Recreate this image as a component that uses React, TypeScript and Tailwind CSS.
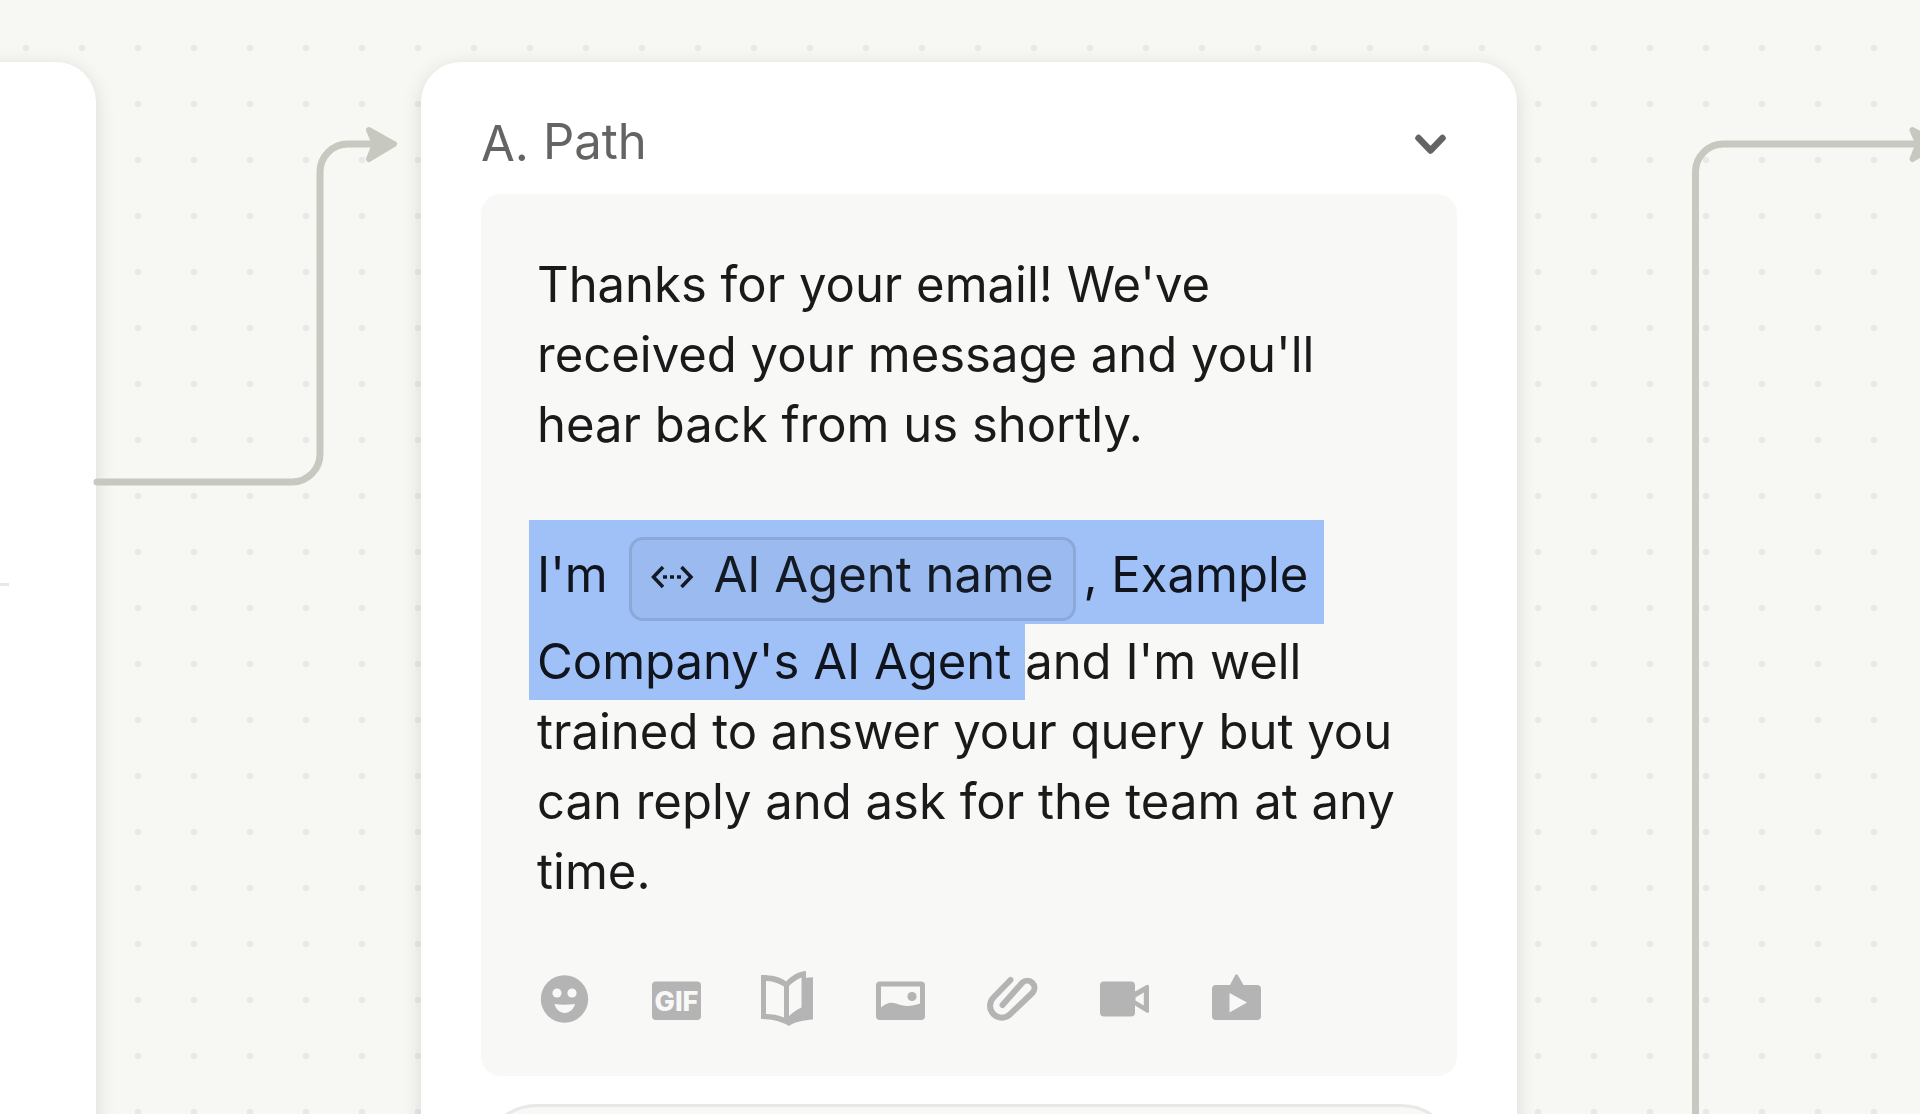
import type { ReactNode } from 'react';

const Icon = ({ children }: { children: ReactNode }) => (
  <svg viewBox="0 0 56 56" className="h-14 w-14" fill="currentColor" aria-hidden="true">
    {children}
  </svg>
);

const tools = [
  {
    label: 'Insert emoji',
    icon: (
      <Icon>
        <circle cx="27.5" cy="28" r="23.7" />
        <g fill="#f8f8f7">
          <circle cx="20" cy="22" r="4.6" />
          <circle cx="35" cy="22" r="4.6" />
          <path d="M17.5 33q10 1.6 20.5 0c-1.5 5.5-5.5 9-10.2 9s-9-3.5-10.3-9z" />
        </g>
      </Icon>
    ),
  },
  {
    label: 'Insert GIF',
    icon: (
      <Icon>
        <rect x="3" y="10.5" width="49" height="38.5" rx="4" />
        <text
          x="27.5"
          y="39.5"
          textAnchor="middle"
          fill="#f8f8f7"
          className="font-['Inter',sans-serif] text-[27px] font-extrabold"
        >
          GIF
        </text>
      </Icon>
    ),
  },
  {
    label: 'Insert article',
    icon: (
      <Icon>
        <path
          fillRule="evenodd"
          d="M0 4C10 4 19 5.5 25 10.5 31 4 38 .5 45 0V6.8L52 6.3V48.5C43 49 33.5 51 28 55 20 50 10 48 0 48zM5 10V43C11 43 17.5 44 23 46.5V15.5C17.5 12 11 10 5 10zM40.5 6.5C35.5 8.5 31.5 11.5 28 15V45C32 41.5 35.5 38.5 40.5 36.5z"
        />
      </Icon>
    ),
  },
  {
    label: 'Insert image',
    icon: (
      <Icon>
        <path
          fillRule="evenodd"
          d="M7 10.5H48a4 4 0 0 1 4 4V45a4 4 0 0 1-4 4H7a4 4 0 0 1-4-4V14.5a4 4 0 0 1 4-4zM8 15.5V36.5C13 32 17.5 30.5 23 32.5 30 35.5 38 36 47 32.5V15.5z"
        />
        <circle cx="39" cy="25.5" r="4.6" />
      </Icon>
    ),
  },
  {
    label: 'Attach file',
    icon: (
      <Icon>
        <path
          d="M25.5 9L8.5 26.5A11.8 11.8 0 0 0 25.2 43.2L47.8 21.5A7.2 7.2 0 0 0 37.5 11.5L17.5 34"
          fill="none"
          stroke="currentColor"
          strokeWidth="6"
          strokeLinecap="round"
          strokeLinejoin="round"
        />
      </Icon>
    ),
  },
  {
    label: 'Insert video',
    icon: (
      <Icon>
        <rect x="3" y="10.5" width="35" height="35" rx="4" />
        <path
          fillRule="evenodd"
          d="M38 20.5L49.5 14Q52 13.2 52 15.5V40.5Q52 42.6 49.5 41.5L38 34.5zM46.8 21.5L38.5 26.5V29.5L46.8 34.5z"
        />
      </Icon>
    ),
  },
  {
    label: 'Insert app',
    icon: (
      <Icon>
        <path
          fillRule="evenodd"
          d="M21 14L26 4.5Q27.5 2 29 4.5L34.5 14H48a4 4 0 0 1 4 4V45a4 4 0 0 1-4 4H7a4 4 0 0 1-4-4V18a4 4 0 0 1 4-4zM20.5 22V41.5L38 31.5z"
        />
      </Icon>
    ),
  },
];

const Connector = ({ d, arrow }: { d: string; arrow: string }) => (
  <g>
    <path d={d} fill="none" strokeWidth="7" strokeLinecap="round" />
    <path d={arrow} strokeWidth="6" strokeLinejoin="round" />
  </g>
);

const Connectors = () => (
  <svg
    className="pointer-events-none absolute inset-0 h-full w-full fill-[#c7c8c0] stroke-[#c7c8c0]"
    aria-hidden="true"
  >
    <Connector
      d="M97 482H292A28 28 0 0 0 320 454V172A28 28 0 0 1 348 144H375"
      arrow="M369 130L394 144L369 159L375 144Z"
    />
    <Connector
      d="M1695.5 2000V172A28 28 0 0 1 1723.5 144H1918"
      arrow="M1912.5 130L1937.5 144L1912.5 159L1918.5 144Z"
    />
  </svg>
);

const VariableChip = ({ name }: { name: string }) => (
  <span className="mx-[7px] mt-[7px] mb-[6px] inline-flex h-[84px] rounded-[14px] border-3 border-[#8ca8d8] bg-[#9abaf0] pr-5 pl-[18px] leading-[70px] text-[#141a24]">
    <svg
      viewBox="0 0 44 28"
      className="mt-6 mr-5 h-7 w-11"
      fill="none"
      stroke="currentColor"
      strokeWidth="3.5"
      aria-hidden="true"
    >
      <path d="M13 3L3.5 13L13 23M31.5 3L41 13L31.5 23" />
      <path d="M13 13H31" strokeDasharray="4 3" />
    </svg>
    {name}
  </span>
);

const PathCard = () => (
  <section className="absolute top-[62px] left-[421px] w-[1096px] rounded-[40px] bg-white px-[60px] pt-[45px] pb-16 shadow-[0_4px_20px_rgba(20,20,0,0.12)]">
    <header className="mb-[17px] flex h-[70px] items-center justify-between">
      <h2 className="flex items-center gap-3.5 leading-[70px] text-[#646462]">
        <span className="pt-1">A.</span>
        <span>Path</span>
      </h2>
      <button type="button" aria-label="Collapse path" className="text-[#646462]">
        <svg viewBox="0 0 56 56" className="h-14 w-14" fill="none" stroke="currentColor" aria-hidden="true">
          <path d="M17.5 24L29.5 36.5L41.5 24" strokeWidth="6.5" strokeLinecap="round" strokeLinejoin="round" />
        </svg>
      </button>
    </header>

    <div className="rounded-[20px] bg-[#f8f8f7] px-14 pt-14 pb-[49px]">
      <div className="leading-[70px] text-[#1a1a1a]">
        <p className="mb-[70px]">
          Thanks for your email! We've received your message and you'll hear back from us shortly.
        </p>
        <p>
          <span className="-ml-2 bg-[#a0c0f8] pt-[25px] pb-5 pl-2 text-[#10141c]">I'm </span>
          <span className="bg-[#a0c0f8] pt-[25px] pb-5">
            <VariableChip name="AI Agent name" />
          </span>
          <span className="bg-[#a0c0f8] pt-[25px] pr-4 pb-5 text-[#10141c]">, Example</span>
          <br />
          <span className="-ml-2 bg-[#a0c0f8] pt-2 pb-[9px] pl-2 text-[#10141c]">Company's AI Agent </span>
          and I'm well trained to answer your query but you can reply and ask for the team at any time.
        </p>
      </div>

      <div className="mt-16 flex gap-14 text-[#b4b4b4]">
        {tools.map((tool) => (
          <button key={tool.label} type="button" aria-label={tool.label}>
            {tool.icon}
          </button>
        ))}
      </div>
    </div>

    <div className="mt-7 h-36 rounded-[56px] border-3 border-[#e8e8e6] bg-[#f8f8f7]" />
  </section>
);

const App = () => {
  return (
    <main className="relative h-screen overflow-hidden bg-[#f7f8f3] bg-[radial-gradient(circle,#e9e9e7_3px,transparent_3.5px)] bg-size-[56px_56px] bg-position-[-2px_20px] font-['Inter',sans-serif] text-[49px]">
      <section className="absolute top-[62px] -left-[1000px] h-[1600px] w-[1096px] rounded-[40px] bg-white shadow-[0_4px_20px_rgba(20,20,0,0.12)]">
        <hr className="mt-[521px] mr-[87px] border-t-3 border-[#e8e8e6]" />
      </section>
      <PathCard />
      <Connectors />
    </main>
  );
};

export default App;
